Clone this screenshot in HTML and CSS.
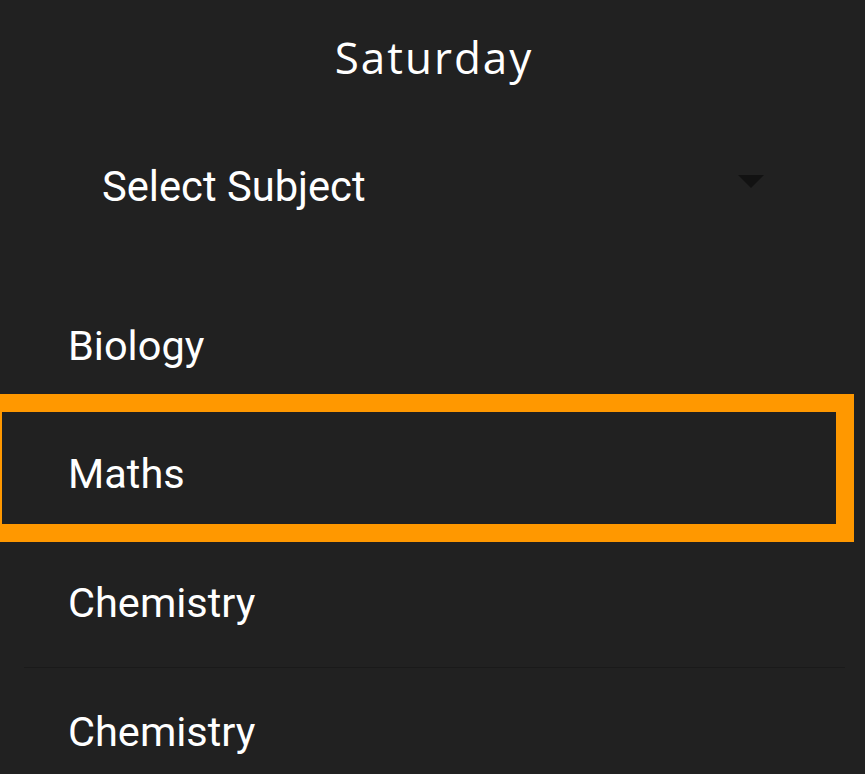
FILE: index.html
```html
<!DOCTYPE html>
<html>
<head>
<meta charset="utf-8">
<link rel="stylesheet" href="styles.css">
</head>
<body>
<div class="screen">
  <header class="title-bar">
    <h1 class="title">Saturday</h1>
  </header>
  <div class="spinner">
    <span class="spinner-label">Select Subject</span>
    <span class="spinner-arrow"></span>
  </div>
  <ul class="subject-list">
    <li class="subject">Biology</li>
    <li class="subject selected">Maths</li>
    <li class="subject">Chemistry</li>
    <li class="divider"></li>
    <li class="subject">Chemistry</li>
  </ul>
</div>
</body>
</html>
```

FILE: styles.css
```css
html, body {
  margin: 0;
  padding: 0;
  background: #212121;
  height: 100%;
  overflow: hidden;
}

.screen {
  width: 865px;
  height: 774px;
  background: #212121;
  color: #ffffff;
  font-family: Roboto, "Liberation Sans", sans-serif;
  position: relative;
  overflow: hidden;
}

.title-bar {
  height: 122px;
  display: flex;
  justify-content: center;
  align-items: flex-start;
}

.title {
  margin: 0;
  padding-top: 27px;
  padding-left: 3px;
  font-family: "Open Sans", sans-serif;
  font-weight: 500;
  font-size: 44px;
  letter-spacing: 2px;
  line-height: 60px;
  color: #ffffff;
}

.spinner {
  height: 130px;
  display: flex;
  align-items: center;
  justify-content: space-between;
  padding: 0 102px 0 102px;
  margin-top: -4px;
  box-sizing: border-box;
}

.spinner-label {
  font-size: 41.7px;
  line-height: 48px;
  margin-top: 8px;
}

.spinner-arrow {
  width: 0;
  height: 0;
  border-left: 13px solid transparent;
  border-right: 13px solid transparent;
  border-top: 13px solid #121212;
  margin-right: -1px;
  margin-top: -4px;
}

.subject-list {
  list-style: none;
  margin: 0;
  padding: 0;
  margin-top: 33px;
}

.subject {
  height: 128.5px;
  display: flex;
  align-items: center;
  padding-left: 68px;
  font-size: 41.5px;
  position: relative;
}

.subject.selected::after {
  content: "";
  position: absolute;
  left: -16px;
  right: 11px;
  top: -16px;
  bottom: -4px;
  border: 18px solid #ff9800;
}

.divider {
  height: 1px;
  margin: 0 20px 0 24px;
  background: #1a1a1a;
}
```
